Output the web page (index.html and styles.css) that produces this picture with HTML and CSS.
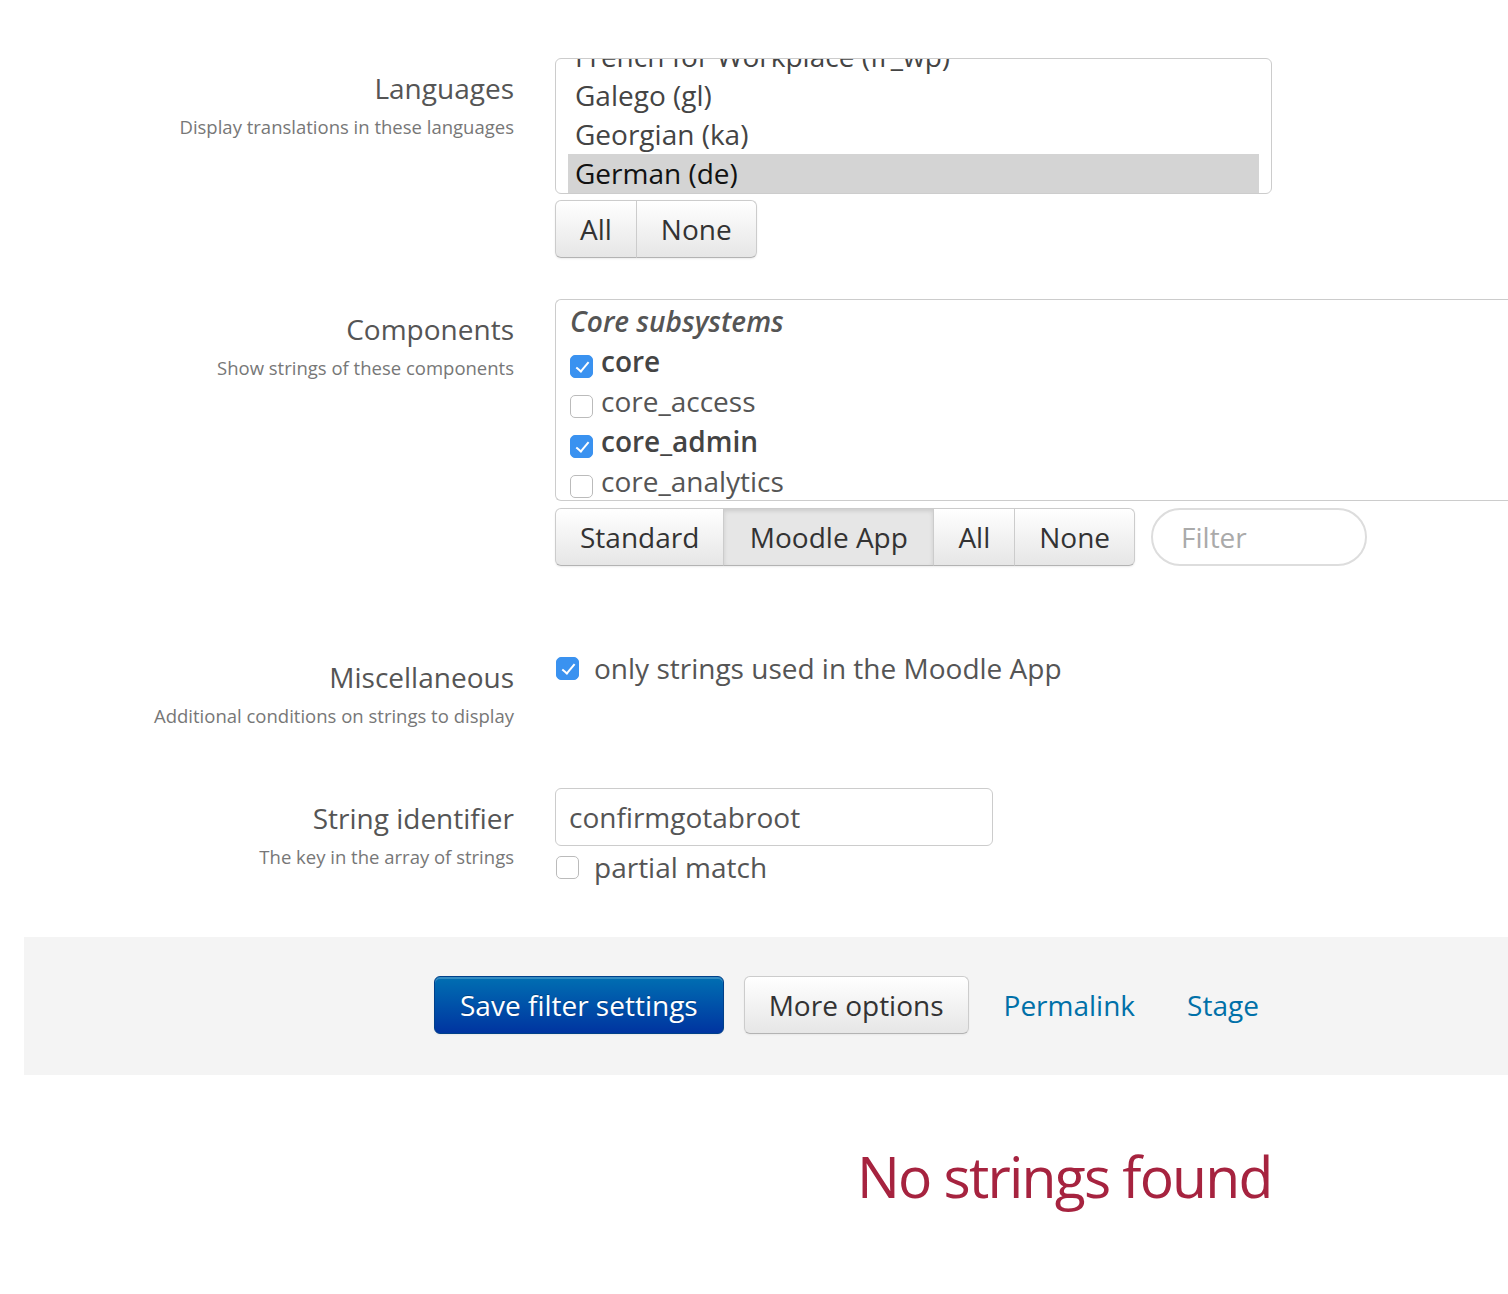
FILE: index.html
```html
<!DOCTYPE html>
<html lang="en">
<head>
<meta charset="utf-8">
<title>Filter</title>
<link rel="stylesheet" href="styles.css">
</head>
<body>
<div class="page">
  <div class="row row-lang">
    <div class="label">
      <div class="label-title">Languages</div>
      <div class="label-help">Display translations in these languages</div>
    </div>
    <div class="control">
      <div class="listbox">
        <ul class="options">
          <li>French for Workplace (fr_wp)</li>
          <li>Galego (gl)</li>
          <li>Georgian (ka)</li>
          <li class="selected">German (de)</li>
        </ul>
      </div>
      <div class="btn-group">
        <button class="btn">All</button><button class="btn">None</button>
      </div>
    </div>
  </div>

  <div class="row row-comp">
    <div class="label">
      <div class="label-title">Components</div>
      <div class="label-help">Show strings of these components</div>
    </div>
    <div class="control">
      <div class="compbox">
        <div class="comp-group">Core subsystems</div>
        <label class="comp checked"><input type="checkbox" checked><span>core</span></label>
        <label class="comp"><input type="checkbox"><span>core_access</span></label>
        <label class="comp checked"><input type="checkbox" checked><span>core_admin</span></label>
        <label class="comp"><input type="checkbox"><span>core_analytics</span></label>
      </div>
      <div class="btn-row">
        <div class="btn-group">
          <button class="btn">Standard</button><button class="btn active">Moodle App</button><button class="btn">All</button><button class="btn">None</button>
        </div>
        <input class="filter" type="text" placeholder="Filter">
      </div>
    </div>
  </div>

  <div class="row row-misc">
    <div class="label">
      <div class="label-title">Miscellaneous</div>
      <div class="label-help">Additional conditions on strings to display</div>
    </div>
    <div class="control">
      <label class="check-line"><input type="checkbox" checked><span>only strings used in the Moodle App</span></label>
    </div>
  </div>

  <div class="row row-str">
    <div class="label">
      <div class="label-title">String identifier</div>
      <div class="label-help">The key in the array of strings</div>
    </div>
    <div class="control">
      <input class="text-input" type="text" value="confirmgotabroot">
      <label class="check-line"><input type="checkbox"><span>partial match</span></label>
    </div>
  </div>

  <div class="actions">
    <button class="btn-primary">Save filter settings</button>
    <button class="btn-default">More options</button>
    <a class="link" href="#">Permalink</a>
    <a class="link link-stage" href="#">Stage</a>
  </div>

  <div class="result">
    <h2 class="no-strings">No strings found</h2>
  </div>
</div>
</body>
</html>
```

FILE: styles.css
```css
html, body {
  margin: 0;
  padding: 0;
  background: #fff;
  overflow-x: hidden;
}
body {
  font-family: "Open Sans", "Liberation Sans", sans-serif;
  color: #555;
}
.page {
  overflow: hidden;
  width: 1508px;
  padding-top: 58px;
}
.row {
  display: grid;
  grid-template-columns: 514px 1fr;
  column-gap: 41px;
}
.row-comp { margin-top: 41px; }
.row-misc { margin-top: 81px; }
.row-str { margin-top: 59px; }

.label {
  text-align: right;
  padding-top: 10px;
}
.label-title {
  font-size: 28px;
  line-height: 40px;
  color: #555;
}
.label-help {
  margin-top: 6px;
  font-size: 18.5px;
  line-height: 26px;
  color: #777;
}
.control {
  min-width: 0;
}

/* Language listbox */
.listbox {
  width: 715px;
  height: 134px;
  border: 1px solid #ccc;
  border-radius: 6px;
  overflow: hidden;
  background: #fff;
}
.options {
  list-style: none;
  margin: -22px 0 0 0;
  padding: 0 12px;
}
.options li {
  font-size: 28px;
  line-height: 39px;
  height: 39px;
  padding-left: 7px;
  color: #444;
  white-space: nowrap;
}
.options li.selected {
  background: #d4d4d4;
  color: #111;
}

/* Button groups */
.btn-group {
  display: inline-flex;
  margin-top: 6px;
  border-radius: 6px;
  box-shadow: 0 1px 2px rgba(0,0,0,.08);
}
.btn {
  font-family: inherit;
  font-size: 28px;
  height: 58px;
  padding: 0 24px;
  color: #333;
  background: linear-gradient(#ffffff, #e6e6e6);
  border: 1px solid #cccccc;
  border-bottom-color: #b3b3b3;
  margin: 0;
  margin-left: -1px;
  border-radius: 0;
  cursor: pointer;
}
.btn:first-child {
  margin-left: 0;
  border-radius: 6px 0 0 6px;
}
.btn:last-child {
  border-radius: 0 6px 6px 0;
}
.btn.active {
  padding: 0 25.5px;
  background: #e6e6e6;
  box-shadow: inset 0 2px 4px rgba(0,0,0,.12);
}

/* Components box */
.compbox {
  width: 1000px;
  height: 199px;
  border: 1px solid #ccc;
  border-right: none;
  border-radius: 6px 0 0 6px;
  overflow: hidden;
  padding: 1px 0 0 14px;
  box-sizing: content-box;
}
.comp-group {
  font-size: 28px;
  line-height: 40px;
  font-style: italic;
  font-weight: 600;
  color: #555;
}
.comp {
  display: flex;
  align-items: center;
  height: 40px;
  font-size: 28px;
  color: #555;
}
.comp input {
  margin: 10px 8px 0 0;
}
.comp.checked span {
  font-weight: 600;
  color: #444;
}

input[type="checkbox"] {
  -webkit-appearance: none;
  appearance: none;
  width: 23px;
  height: 23px;
  border: 1px solid #bbb;
  border-radius: 5px;
  background: #fff;
  position: relative;
  flex: none;
  box-sizing: border-box;
}
input[type="checkbox"]:checked {
  background: #3a92f0;
  border-color: #3a92f0;
}
input[type="checkbox"]:checked::after {
  content: "";
  position: absolute;
  left: 8px;
  top: 3px;
  width: 5px;
  height: 11px;
  border: solid #fff;
  border-width: 0 2px 2px 0;
  transform: rotate(40deg);
}

.btn-row {
  display: flex;
  align-items: flex-start;
  gap: 16px;
}
.btn-row .btn-group {
  margin-top: 7px;
}
.filter {
  margin-top: 7px;
  width: 216px;
  height: 58px;
  box-sizing: border-box;
  border: 2px solid #ddd;
  border-radius: 30px;
  padding: 0 28px;
  font-family: inherit;
  font-size: 28px;
  color: #555;
  outline: none;
}
.filter::placeholder {
  color: #aaa;
}

/* check lines */
.check-line {
  display: flex;
  align-items: center;
  height: 42px;
  font-size: 28px;
  color: #555;
}
.check-line input {
  margin: 0 15px 0 1px;
}

.text-input {
  display: block;
  width: 438px;
  height: 58px;
  box-sizing: border-box;
  border: 1px solid #ccc;
  border-radius: 6px;
  padding: 0 13px;
  font-family: inherit;
  font-size: 28px;
  color: #555;
  outline: none;
}

/* Actions bar */
.actions {
  margin: 49px 0 0 24px;
  background: #f4f4f4;
  height: 138px;
  box-sizing: border-box;
  padding: 39px 0 0 410px;
  display: flex;
  align-items: flex-start;
}
.btn-primary {
  font-family: inherit;
  font-size: 28px;
  height: 58px;
  padding: 0 25px;
  color: #fff;
  background: linear-gradient(#006fb2, #0034a0);
  border: 1px solid #00408a;
  border-radius: 6px;
  text-shadow: 0 -1px 0 rgba(0,0,0,.25);
  box-shadow: inset 0 2px 0 rgba(255,255,255,.2), 0 1px 2px rgba(0,0,0,.05);
  cursor: pointer;
}
.btn-default {
  font-family: inherit;
  font-size: 28px;
  height: 58px;
  padding: 0 24px;
  margin-left: 20px;
  color: #333;
  background: linear-gradient(#ffffff, #e6e6e6);
  border: 1px solid #ccc;
  border-bottom-color: #b3b3b3;
  border-radius: 6px;
  box-shadow: 0 1px 2px rgba(0,0,0,.05);
  cursor: pointer;
}
.link {
  font-size: 28px;
  line-height: 58px;
  color: #0070a8;
  text-decoration: none;
  margin-left: 35px;
}
.link-stage {
  margin-left: 52px;
}

.result {
  padding: 61px 0 0 857px;
}
.no-strings {
  margin: 0;
  font-size: 57px;
  font-weight: 400;
  letter-spacing: -1.8px;
  line-height: 80px;
  color: #a6233f;
  white-space: nowrap;
}
```
